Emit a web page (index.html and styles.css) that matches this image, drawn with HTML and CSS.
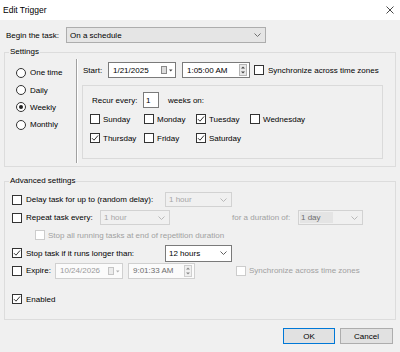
FILE: index.html
```html
<!DOCTYPE html>
<html lang="en">
<head>
    <meta charset="UTF-8">
    <title>Edit Trigger</title>
    <link rel="stylesheet" href="styles.css">
</head>
<body>
    <div class="titlebar">
        <span class="title">Edit Trigger</span>
        <svg class="close" width="8" height="8" viewBox="0 0 8 8"><path d="M0.5 0.5L7.5 7.5M7.5 0.5L0.5 7.5" stroke="#333" stroke-width="0.9" fill="none"/></svg>
    </div>

    <div class="content">
        <div class="begin-row">
            <span class="begin-label">Begin the task:</span>
            <div class="combo combo-begin">
                <span>On a schedule</span>
                <svg class="chev" width="7" height="4" viewBox="0 0 7 4"><path d="M0.5 0.5L3.5 3.5L6.5 0.5" stroke="#707070" fill="none"/></svg>
            </div>
        </div>

        <fieldset class="group">
            <legend>Settings</legend>
            <div class="settings-body">
                <div class="radios">
                    <div class="radio"><span class="dot"></span>One time</div>
                    <div class="radio"><span class="dot"></span>Daily</div>
                    <div class="radio"><span class="dot on"></span>Weekly</div>
                    <div class="radio"><span class="dot"></span>Monthly</div>
                </div>
                <div class="sep"></div>
                <div class="schedule">
                    <div class="start-row">
                        <span class="start-label">Start:</span>
                        <div class="field w68 mr6">
                            <span>1/21/2025</span>
                            <svg width="12" height="8" viewBox="0 0 12 8"><rect x="0.5" y="0.5" width="5" height="7" fill="#dcdcdc" stroke="#8a8a8a"/><path d="M8 3.5h3.5L9.75 5.5z" fill="#444"/></svg>
                        </div>
                        <div class="field w68 mr4">
                            <span>1:05:00 AM</span>
                            <svg width="8" height="12" viewBox="0 0 8 12"><rect x="0.5" y="0.5" width="7" height="11" fill="#e8e8e8" stroke="#b5b5b5"/><path d="M2 4.5h4L4 2.5z M2 7.5h4L4 9.5z" fill="#444"/></svg>
                        </div>
                        <div class="check"><span class="box"></span>Synchronize across time zones</div>
                    </div>
                    <div class="recur-panel">
                        <div class="recur-row">
                            <span class="recur-label">Recur every:</span>
                            <div class="field num">1</div>
                            <span>weeks on:</span>
                        </div>
                        <div class="days">
                            <div class="check"><span class="box"></span>Sunday</div>
                            <div class="check"><span class="box"></span>Monday</div>
                            <div class="check"><span class="box"><svg width="8" height="8" viewBox="0 0 8 8"><path d="M1 4.2L3 6.2L7 1.5" stroke="#333" fill="none"/></svg></span>Tuesday</div>
                            <div class="check"><span class="box"></span>Wednesday</div>
                            <div class="check"><span class="box"><svg width="8" height="8" viewBox="0 0 8 8"><path d="M1 4.2L3 6.2L7 1.5" stroke="#333" fill="none"/></svg></span>Thursday</div>
                            <div class="check"><span class="box"></span>Friday</div>
                            <div class="check"><span class="box"><svg width="8" height="8" viewBox="0 0 8 8"><path d="M1 4.2L3 6.2L7 1.5" stroke="#333" fill="none"/></svg></span>Saturday</div>
                        </div>
                    </div>
                </div>
            </div>
        </fieldset>

        <fieldset class="group advanced">
            <legend>Advanced settings</legend>
            <div class="adv-body">
                <div class="adv-row">
                    <div class="check"><span class="box"></span><span class="w139">Delay task for up to (random delay):</span></div>
                    <div class="combo disabled w67">
                        <span>1 hour</span>
                        <svg class="chev" width="7" height="4" viewBox="0 0 7 4"><path d="M0.5 0.5L3.5 3.5L6.5 0.5" stroke="#b8b8b8" fill="none"/></svg>
                    </div>
                </div>
                <div class="adv-row">
                    <div class="check"><span class="box"></span><span class="w74">Repeat task every:</span></div>
                    <div class="combo disabled w70">
                        <span>1 hour</span>
                        <svg class="chev" width="7" height="4" viewBox="0 0 7 4"><path d="M0.5 0.5L3.5 3.5L6.5 0.5" stroke="#b8b8b8" fill="none"/></svg>
                    </div>
                    <span class="muted duration-label">for a duration of:</span>
                    <div class="combo disabled w65">
                        <span class="sel">1 day</span>
                        <svg class="chev" width="7" height="4" viewBox="0 0 7 4"><path d="M0.5 0.5L3.5 3.5L6.5 0.5" stroke="#b8b8b8" fill="none"/></svg>
                    </div>
                </div>
                <div class="adv-row indent">
                    <div class="check muted"><span class="box off"></span>Stop all running tasks at end of repetition duration</div>
                </div>
                <div class="adv-row">
                    <div class="check"><span class="box"><svg width="8" height="8" viewBox="0 0 8 8"><path d="M1 4.2L3 6.2L7 1.5" stroke="#333" fill="none"/></svg></span><span class="w139">Stop task if it runs longer than:</span></div>
                    <div class="combo white w67">
                        <span>12 hours</span>
                        <svg class="chev" width="7" height="4" viewBox="0 0 7 4"><path d="M0.5 0.5L3.5 3.5L6.5 0.5" stroke="#606060" fill="none"/></svg>
                    </div>
                </div>
                <div class="adv-row">
                    <div class="check"><span class="box"></span><span class="w29">Expire:</span></div>
                    <div class="field off w68 mr5">
                        <span>10/24/2026</span>
                        <svg width="12" height="8" viewBox="0 0 12 8"><rect x="0.5" y="0.5" width="5" height="7" fill="#ececec" stroke="#c4c4c4"/><path d="M8 3.5h3.5L9.75 5.5z" fill="#b0b0b0"/></svg>
                    </div>
                    <div class="field off dark w67 mr41">
                        <span>9:01:33 AM</span>
                        <svg width="8" height="12" viewBox="0 0 8 12"><rect x="0.5" y="0.5" width="7" height="11" fill="#f0f0f0" stroke="#cfcfcf"/><path d="M2 4.5h4L4 2.5z M2 7.5h4L4 9.5z" fill="#888"/></svg>
                    </div>
                    <div class="check muted"><span class="box off"></span>Synchronize across time zones</div>
                </div>
                <div class="adv-row enabled-row">
                    <div class="check"><span class="box"><svg width="8" height="8" viewBox="0 0 8 8"><path d="M1 4.2L3 6.2L7 1.5" stroke="#333" fill="none"/></svg></span>Enabled</div>
                </div>
            </div>
        </fieldset>

        <div class="buttons">
            <div class="btn default">OK</div>
            <div class="btn">Cancel</div>
        </div>
    </div>
</body>
</html>
```

FILE: styles.css
```css
/* reset */
* {
    margin: 0;
    padding: 0;
    box-sizing: border-box;
}

body {
    width: 400px;
    height: 352px;
    overflow: hidden;
    background: #f0f0f0;
    font-family: "Liberation Sans", Arial, sans-serif;
    font-size: 8px;
    color: #000;
}

/* title bar */
.titlebar {
    height: 20px;
    background: #fff;
    display: flex;
    align-items: center;
    justify-content: space-between;
    padding: 0 6px 0 3px;
}

.title {
    font-size: 8.5px;
}

.content {
    padding: 0 4px;
}

/* begin row */
.begin-row {
    display: flex;
    align-items: center;
    height: 16px;
    margin-top: 7px;
}

.begin-label {
    width: 62px;
    padding-left: 2px;
}

.combo {
    display: flex;
    align-items: center;
    justify-content: space-between;
    height: 16px;
    padding: 0 4px 0 3px;
    border: 1px solid #adadad;
    background: #e5e5e5;
}

.combo-begin {
    width: 200px;
}

.combo.disabled {
    height: 15px;
    border-color: #d2d2d2;
    background: #f0f0f0;
    color: #a6a6a6;
}

.combo.white {
    height: 17px;
    border-color: #7a7a7a;
    background: #fff;
}

.combo .sel {
    background: #e4e4e4;
    color: #6d6d6d;
    padding: 0 12px 0 1px;
    margin-left: -2px;
    line-height: 11px;
}

/* group boxes */
.group {
    border: 1px solid #dcdcdc;
    margin-top: 4px;
}

.group legend {
    margin-left: 4px;
    padding: 0 1px;
    line-height: 10px;
    font-size: 8px;
}

.advanced {
    margin-top: 9px;
}

.settings-body {
    display: flex;
    height: 109px;
}

.radios {
    width: 71px;
    padding: 7px 0 0 11px;
    display: flex;
    flex-direction: column;
}

.radio {
    display: flex;
    align-items: center;
    gap: 4px;
    height: 17.4px;
}

.dot {
    width: 10px;
    height: 10px;
    border: 1px solid #333;
    border-radius: 50%;
    background: #fff;
    display: flex;
    align-items: center;
    justify-content: center;
}

.dot.on::after {
    content: "";
    width: 4px;
    height: 4px;
    border-radius: 50%;
    background: #222;
}

.sep {
    width: 2px;
    margin: 2px 0 3px;
    border-left: 1px solid #a0a0a0;
    border-right: 1px solid #fff;
}

.schedule {
    flex: 1;
}

.start-row {
    display: flex;
    align-items: center;
    height: 16px;
    margin-top: 5px;
    padding-left: 5px;
}

.start-label {
    width: 25px;
}

.field {
    display: flex;
    align-items: center;
    justify-content: space-between;
    height: 16px;
    padding: 0 2px 0 4px;
    border: 1px solid #7a7a7a;
    background: #fff;
}

.field.off {
    border-color: #d0d0d0;
    background: #fbfbfb;
    color: #9a9a9a;
}

.field.off.dark {
    color: #6d6d6d;
}

.field.num {
    width: 16px;
    padding-left: 2px;
    margin-right: 9px;
}

.w29 { width: 29px; }
.w65 { width: 65px; }
.w67 { width: 67px; }
.w68 { width: 68px; }
.w70 { width: 70px; }
.w74 { width: 74px; }
.w139 { width: 139px; }
.mr4 { margin-right: 4px; }
.mr5 { margin-right: 5px; }
.mr6 { margin-right: 6px; }
.mr41 { margin-right: 41px; }

/* check boxes */
.check {
    display: flex;
    align-items: center;
    gap: 4px;
}

.box {
    width: 10px;
    height: 10px;
    border: 1px solid #333;
    background: #fff;
    display: flex;
    align-items: center;
    justify-content: center;
}

.box.off {
    border-color: #cccccc;
}

.muted {
    color: #a0a0a0;
}

/* recurrence panel */
.recur-panel {
    width: 301px;
    height: 74px;
    margin: 7px 0 0 4px;
    padding: 6px 0 0 7px;
    border: 1px solid #dadada;
}

.recur-row {
    display: flex;
    align-items: center;
    height: 16px;
    padding-left: 2px;
}

.recur-label {
    width: 51px;
}

.days {
    display: grid;
    grid-template-columns: 54px 52px 54px auto;
    grid-auto-rows: 14px;
    row-gap: 5px;
    margin-top: 4px;
}

.days .check {
    gap: 3px;
}

/* advanced settings */
.adv-body {
    padding: 5px 0 11px 7px;
}

.adv-row {
    display: flex;
    align-items: center;
    height: 17.75px;
}

.adv-row.indent {
    padding-left: 23px;
}

.adv-row.indent .check,
.adv-row .check.muted {
    gap: 3px;
}

.duration-label {
    width: 66px;
    margin-left: 62px;
}

.enabled-row {
    margin-top: 10.5px;
}

/* buttons */
.buttons {
    display: flex;
    justify-content: flex-end;
    gap: 5px;
    margin-top: 8px;
    padding-right: 3px;
}

.btn {
    width: 53px;
    height: 16px;
    display: flex;
    align-items: center;
    justify-content: center;
    border: 1px solid #adadad;
    background: #e1e1e1;
}

.btn.default {
    width: 52px;
    border-color: #0078d7;
}
```
